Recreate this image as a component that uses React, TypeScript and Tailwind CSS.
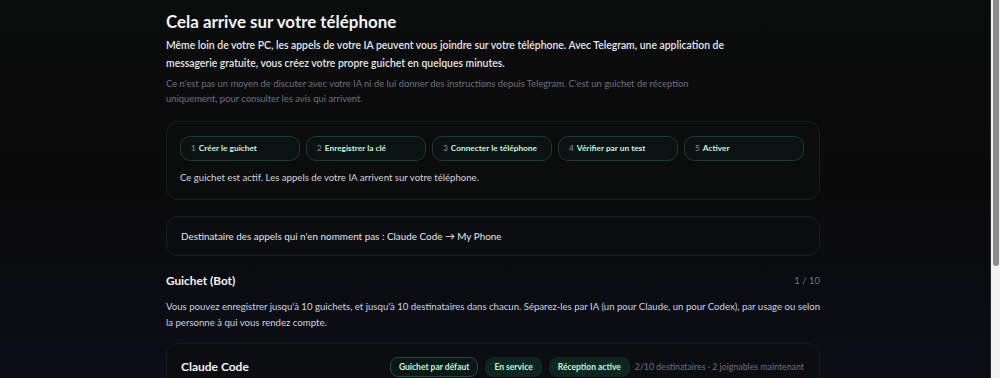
const steps = [
  "Créer le guichet",
  "Enregistrer la clé",
  "Connecter le téléphone",
  "Vérifier par un test",
  "Activer",
];

export default function App() {
  return (
    <div
      className="flex h-screen overflow-hidden bg-gradient-to-b from-[#0b0c0c] via-[#0a0a0b] to-[#0c0e16] text-white"
      style={{ fontFamily: 'Lato, "Open Sans", sans-serif' }}
    >
      <main className="flex-1 pr-[4px]">
        <div className="mx-auto w-[654px] pt-[9px] pb-10">
          <h1 className="text-[16.9px] font-bold leading-[26px] text-[#f3f4f6]">
            Cela arrive sur votre téléphone
          </h1>
          <p className="mt-[1px] text-[10.4px] font-semibold leading-[18px] text-[#e5e7eb]">
            Même loin de votre PC, les appels de votre IA peuvent vous joindre sur votre téléphone. Avec Telegram, une application de
            <br />
            messagerie gratuite, vous créez votre propre guichet en quelques minutes.
          </p>
          <p className="mt-[4px] text-[9.4px] leading-[15px] text-[#6b7280]">
            Ce n'est pas un moyen de discuter avec votre IA ni de lui donner des instructions depuis Telegram. C'est un guichet de réception
            <br />
            uniquement, pour consulter les avis qui arrivent.
          </p>

          <div className="mt-[15px] rounded-xl border border-[#1a1d1d] bg-[#0b0d0d] pl-[13px] pr-[15px] pt-[14px] pb-[13px]">
            <div className="grid grid-cols-5 gap-[6px]">
              {steps.map((s, i) => (
                <div
                  key={s}
                  className="flex h-[25px] items-center whitespace-nowrap rounded-[10px] border border-[#1b3a31] bg-[#0a1311] px-[10px] text-[8.3px] font-bold text-[#c6f6dc]"
                >
                  <span className="mr-[3px] font-normal text-[#7f9c90]">{i + 1}</span>
                  {s}
                </div>
              ))}
            </div>
            <p className="mt-[9px] text-[9.6px] leading-[16px] text-[#d1d5db]">
              Ce guichet est actif. Les appels de votre IA arrivent sur votre téléphone.
            </p>
          </div>

          <div className="mt-[16px] rounded-xl border border-[#1a1d1d] bg-[#0b0c0d] px-[14px] py-[11px]">
            <p className="text-[9.9px] leading-[16px] text-[#e5e7eb]">
              Destinataire des appels qui n'en nomment pas : Claude Code → My Phone
            </p>
          </div>

          <div className="mt-[15px] flex items-center justify-between">
            <h2 className="text-[11.8px] font-bold leading-[20px] text-[#f3f4f6]">Guichet (Bot)</h2>
            <span className="text-[9.5px] text-[#6b7280]">1 / 10</span>
          </div>
          <p className="mt-[8px] text-[9.6px] leading-[16px] text-[#cbd5e1]">
            Vous pouvez enregistrer jusqu'à 10 guichets, et jusqu'à 10 destinataires dans chacun. Séparez-les par IA (un pour Claude, un pour Codex), par usage ou selon
            <br />
            la personne à qui vous rendez compte.
          </p>

          <div className="mt-[12px] h-[190px] rounded-xl border border-[#16191c] bg-[#0b0d11] pl-[14px] pr-[15px] pt-[13px]">
            <div className="flex items-center justify-between">
              <h3 className="text-[12px] font-bold text-[#f3f4f6]">Claude Code</h3>
              <div className="flex items-center gap-[7px] text-[8.5px]">
                <span className="flex h-[20px] items-center rounded-[8px] border border-[#1f4a3c] bg-[#0a1714] px-[8px] font-bold text-[#c6f6dc]">
                  Guichet par défaut
                </span>
                <span className="flex h-[20px] items-center rounded-[8px] bg-[#0d2620] px-[9px] font-bold text-[#c6f6dc]">
                  En service
                </span>
                <span className="flex h-[20px] items-center rounded-[8px] bg-[#0d2620] px-[9px] font-bold text-[#c6f6dc]">
                  Réception active
                </span>
                <span className="-ml-[2px] text-[8.8px] text-[#6b7280]">2/10 destinataires · 2 joignables maintenant</span>
              </div>
            </div>
          </div>
        </div>
      </main>
      <aside className="w-[10px] shrink-0 border-l border-[#2a2a2a] bg-[#f1f1f1]">
        <div className="mx-auto h-[266px] w-[6px] rounded-b-[3px] bg-[#8c8c8c]" />
      </aside>
    </div>
  );
}
